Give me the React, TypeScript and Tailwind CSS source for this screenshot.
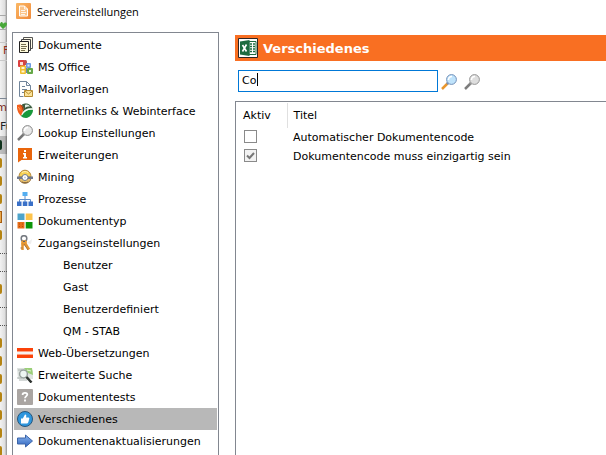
import { useState } from "react";
import type { ReactNode } from "react";

interface NavEntry {
  label: string;
  icon?: ReactNode;
}

interface Setting {
  id: string;
  title: string;
  active: boolean;
}

const svgProps = { width: 16, height: 16, viewBox: "0 0 16 16", "aria-hidden": true };

const AppIcon = () => (
  <svg {...svgProps}>
    <defs>
      <linearGradient id="app" x1="0" y1="0" x2="1" y2="1">
        <stop offset="0" stopColor="#fbb866" />
        <stop offset="1" stopColor="#f08a3a" />
      </linearGradient>
    </defs>
    <rect x="0" y="0" width="15" height="16" rx="1" fill="url(#app)" />
    <path d="M3.500 3h5l3 3v7h-8z" fill="#fbc48a" stroke="#fff" />
    <path d="M8.500 3v3h3M5 7.500h4M5 9.500h5M5 11.500h4" fill="none" stroke="#fff" strokeWidth=".8" />
  </svg>
);

const DocumentsIcon = () => (
  <svg {...svgProps}>
    <path d="M6.500 .5h9v11h-9z" fill="#fffbe8" stroke="#555" />
    <path d="M4.500 2.500h9v11h-9z" fill="#fffbe8" stroke="#444" />
    <path d="M2.500 4.500h9v11h-9z" fill="#fffbdc" stroke="#222" />
    <path d="M4 7.500h5M4 9.500h6M4 11.500h5M4 13.500h4" stroke="#77704c" />
  </svg>
);

const OfficeIcon = () => (
  <svg {...svgProps}>
    <rect x="1" y="1" width="7" height="7" rx="1" fill="#dc4040" />
    <path d="M3 3h3v3H3z" fill="#fbdcd6" />
    <path d="M7 1.500c1-1 3-1 3 1.500v3H8z" fill="#c0504c" />
    <rect x="9" y="4" width="5" height="5" rx="1" fill="#6c9ae0" />
    <path d="M10.500 5.500h2v2h-2z" fill="#e2ecfb" />
    <rect x="3" y="6.500" width="6" height="8.500" rx="1" fill="#efbd2d" />
    <path d="M4.500 8h3v2h-3zM4.500 11.500h3v2h-3z" fill="#fff6d2" />
    <rect x="10" y="9" width="6" height="6" rx="1" fill="#66a848" />
    <path d="M12 11h2v2h-2z" fill="#e2f4d9" />
    <path d="M9 9h1v5H9z" fill="#6b85b8" />
  </svg>
);

const MailTemplateIcon = () => (
  <svg {...svgProps}>
    <path d="M2.500 15.500V.5h7l4 4v5M9.500 .5v4h4M2.500 15.500h4" fill="none" stroke="#71859b" />
    <path d="M5 5.500h3M5 8.500h5M5 11.500h2" stroke="#71859b" />
    <path d="M7.500 9.500h8v6h-8z" fill="#fbe39a" stroke="#b68c32" />
    <path d="m8 10 3.500 3L15 10" fill="none" stroke="#b68c32" />
  </svg>
);

const GlobeIcon = () => (
  <svg {...svgProps}>
    <circle cx="9" cy="7.500" r="7" fill="#bcd3bd" />
    <path d="M5 1.500c4-2.500 9-.5 10.800 4.500C12 4 8 6 6 10z" fill="#3c5a40" />
    <path d="M8 2c2-1 4 0 5 1.500-2 0-4 0-5 1.500z" fill="#e3eee4" />
    <path d="M4 13c2-4 6-7 12-6.500 0 4-3 8-7 8.500-2 0-4-1-5-2z" fill="#18983b" />
    <path d="M4.500 12c2-4 6-6.500 11.500-6" fill="none" stroke="#f5fbf5" strokeWidth="1.500" />
    <path d="M0 2c3-1.500 6 0 6.500 3 .4 3-1.500 4-2.500 8C1 10.500-.5 6 0 2z" fill="#f4601d" />
    <path d="M3.500 2c2 1 2.500 3 2 4.500" fill="none" stroke="#8d3b1b" />
    <path d="M1 4.500c1.500 0 2 1 2 3" fill="none" stroke="#ffa261" />
  </svg>
);

const LensIcon = ({ glass, rim, handle }: { glass: string; rim: string; handle: string }) => (
  <svg {...svgProps}>
    <path d="m1 15 5.500-5.500" stroke={handle} strokeWidth="2.500" />
    <path d="m5.500 8.500 2 2" stroke={rim} strokeWidth="1.500" />
    <circle cx="10.500" cy="5.500" r="4.900" fill={glass} stroke={rim} />
    <path d="M7.500 6c0-2 1.500-3.500 3.500-3.500" fill="none" stroke="#fff" strokeWidth="1.500" />
  </svg>
);

const ExtensionIcon = () => (
  <svg {...svgProps}>
    <path d="M1 1h14v12H4.500L1 15.500z" fill="#e9650c" />
    <path d="M7 3h2v2H7zM6 6h3v4h1v1.500H6V10h1V7.500H6z" fill="#fff" />
  </svg>
);

const MiningIcon = () => (
  <svg {...svgProps}>
    <path d="M2 8c0-9 12-9 12 0z" fill="#f7d154" stroke="#b5883c" />
    <path d="M2 9h12c-.5 7-11.500 7-12 0z" fill="#e9c06a" stroke="#9d7c4c" />
    <path d="M0 7.500h16v2.500H0z" fill="#70798c" />
    <path d="M5 3.500c2-1.200 4-1.200 6 0" fill="none" stroke="#fff3b5" />
    <circle cx="8" cy="8.500" r="3" fill="#fff" stroke="#737b88" />
    <circle cx="8" cy="8.500" r="1" fill="#c5ccd6" />
    <path d="M5 13c2 1 4 1 6 0" fill="none" stroke="#7a5c34" />
  </svg>
);

const ProcessIcon = () => (
  <svg {...svgProps}>
    <path d="M8 5v6M2.500 11V8.500h11V11" fill="none" stroke="#5c8cc8" />
    <path d="M5.500 1h5v4h-5z" fill="#54aef0" />
    <path d="M0 10.500h4.500V15H0zM5.800 10.500h4.500V15H5.800zM11.500 10.500H16V15h-4.500z" fill="#3a70c8" />
  </svg>
);

const DocTypeIcon = () => (
  <svg {...svgProps}>
    <path d="M.5 .5h7v6.500h-7z" fill="#4ea4cb" />
    <path d="M8.700 .5h6.800v6.500H8.700z" fill="#fdc34b" />
    <path d="M.5 9h7v6.500h-7z" fill="#e66d18" />
    <path d="M8.700 9h6.800v6.500H8.700z" fill="#0d9408" />
    <path d="M2 10.500h1v1H2zM5 10.500h1v1H5zM2 13h1v1H2zM5 13h1v1H5z" fill="#b84d0b" />
  </svg>
);

const KeysIcon = () => (
  <svg {...svgProps}>
    <path d="m10 8 5-4-1 5z" fill="#eeeeee" />
    <circle cx="7" cy="3.500" r="2.800" fill="none" stroke="#777b82" strokeWidth="1.500" />
    <path d="M4 6.500c1-1.500 5-2 6 0l-1 3.500-4 1z" fill="#e89a32" />
    <path d="M5.500 8v7M8 8l4 6.500" stroke="#e39431" strokeWidth="2.500" />
    <path d="m7 9 4 6M3.500 13h2" stroke="#a5733a" />
    <path d="M6 6h2v1H6z" fill="#5e6066" />
  </svg>
);

const FlagIcon = () => (
  <svg {...svgProps}>
    <path d="M0 3h16v10H0z" fill="#fb4209" />
    <path d="M0 6.500h16v3H0z" fill="#fff" />
    <path d="M0 8h16" stroke="#eee2de" />
  </svg>
);

const AdvancedSearchIcon = () => (
  <svg {...svgProps}>
    <path d="M0 1h13l3 3v8H1z" fill="#dde2df" />
    <path d="M7 1h8l1 7-5-2z" fill="#9bcf78" />
    <path d="m10 3 4 1" stroke="#e3f4d6" />
    <path d="M1 3h4M0 11h5M2 13h8" stroke="#aab2af" />
    <circle cx="6.500" cy="7" r="3.900" fill="#edf5f2" stroke="#98a19e" strokeWidth="1.500" />
    <path d="m9.500 10 5 5.500" stroke="#2e3330" strokeWidth="2.500" />
  </svg>
);

const TestsIcon = () => (
  <svg {...svgProps}>
    <rect width="16" height="16" rx="1" fill="#aaa5a2" />
    <path d="M5.700 6V5C6 3.300 10.300 3.300 10.300 5.500 10.300 7 8 7.300 8 9.300M8 10.500v2" fill="none" stroke="#fff" strokeWidth="1.800" />
  </svg>
);

const ThumbIcon = () => (
  <svg {...svgProps}>
    <circle cx="8" cy="8" r="7.500" fill="#2f96dd" stroke="#28577c" />
    <path d="M4 7.500h1.800L8 3.500c1.500 0 1.500 1 1 3h2.500c.8 0 1 .8.700 1.500l-1 3.500c-.2.700-.7 1-1.500 1H4z" fill="#fff" />
  </svg>
);

const ArrowIcon = () => (
  <svg {...svgProps}>
    <defs>
      <linearGradient id="arrow" x1="0" y1="0" x2="0" y2="1">
        <stop offset="0" stopColor="#8bb7f0" />
        <stop offset="1" stopColor="#2c62bd" />
      </linearGradient>
    </defs>
    <path d="M.5 5h8V2l7 6-7 6v-3h-8z" fill="url(#arrow)" stroke="#3c65a8" />
  </svg>
);

const ExcelIcon = () => (
  <svg width="20" height="20" viewBox="0 0 20 20" aria-hidden="true">
    <path d="M.5 .5h19v19H.5z" fill="#fff" stroke="#2e2523" />
    <path d="M11 3.500h7v13h-7z" fill="#fff" stroke="#1d6b40" />
    <path d="M12 6h2M15 6h2M12 8.500h2M15 8.500h2M12 11h2M15 11h2M12 13.500h2M15 13.500h2" stroke="#1d6b40" strokeWidth="1.500" />
    <path d="M2 3.500 11.500 2v16L2 16.500z" fill="#1d6b40" />
    <path d="m4.500 7 4 6.500M8.500 6.500l-4 7" stroke="#fff" strokeWidth="1.600" />
  </svg>
);

const navEntries: NavEntry[] = [
  { label: "Dokumente", icon: <DocumentsIcon /> },
  { label: "MS Office", icon: <OfficeIcon /> },
  { label: "Mailvorlagen", icon: <MailTemplateIcon /> },
  { label: "Internetlinks & Webinterface", icon: <GlobeIcon /> },
  { label: "Lookup Einstellungen", icon: <LensIcon glass="#e9e9e9" rim="#888888" handle="#777777" /> },
  { label: "Erweiterungen", icon: <ExtensionIcon /> },
  { label: "Mining", icon: <MiningIcon /> },
  { label: "Prozesse", icon: <ProcessIcon /> },
  { label: "Dokumententyp", icon: <DocTypeIcon /> },
  { label: "Zugangseinstellungen", icon: <KeysIcon /> },
  { label: "Benutzer" },
  { label: "Gast" },
  { label: "Benutzerdefiniert" },
  { label: "QM - STAB" },
  { label: "Web-Übersetzungen", icon: <FlagIcon /> },
  { label: "Erweiterte Suche", icon: <AdvancedSearchIcon /> },
  { label: "Dokumententests", icon: <TestsIcon /> },
  { label: "Verschiedenes", icon: <ThumbIcon /> },
  { label: "Dokumentenaktualisierungen", icon: <ArrowIcon /> },
];

const initialSettings: Setting[] = [
  { id: "auto-code", title: "Automatischer Dokumentencode", active: false },
  { id: "unique-code", title: "Dokumentencode muss einzigartig sein", active: true },
];

// marks in the list of the window behind, one per 18px row
const backgroundRows = [
  "gold", "gold", "gold", "orange", "gold", "dots", "dots", "gold", "dots",
  "dots", "gold", "gold", "gold", "gold", "gold", "gold", "gold",
];

const BackgroundWindow = () => (
  <div className="flex h-full w-[7px] shrink-0 flex-col overflow-hidden bg-linear-to-r from-[#f2f2f2] via-[#dedede] via-70% to-[#8e8e8e] text-[11px]">
    <div className="h-[15px] shrink-0" />
    <div className="flex h-[14px] shrink-0 items-end border-t border-[#a8a8a8]">
      <svg width="7" height="8" viewBox="0 0 7 8" aria-hidden="true">
        <path d="M0 3c1-3 3-2 3 0 1-2 4-2 4 0 0 2-2 3-4 5L0 5z" fill="#48a839" />
      </svg>
    </div>
    <div className="flex h-[13px] shrink-0 border-t border-[#a8a8a8]" />
    <div className="flex h-[18px] shrink-0 items-center border-t border-[#c9c9c9] pl-[3px] text-[#8c2f20]">F</div>
    <div className="h-[38px] shrink-0 border-t border-[#c9c9c9]" />
    <div className="flex h-[20px] shrink-0 items-center justify-end border-t border-[#7d8794] text-[#7a2a1c]">m</div>
    <div className="flex h-[18px] shrink-0 items-center text-[#222]">Fu</div>
    <div className="flex h-[18px] shrink-0 items-center bg-black/20">
      <span className="h-[10px] w-[2px] rounded-r-sm bg-[#10331d]" />
    </div>
    {backgroundRows.map((kind, i) => (
      <div key={i} className="flex h-[18px] shrink-0 items-center">
        {kind === "gold" && <span className="h-[10px] w-[2px] rounded-r-sm bg-[#b58412]" />}
        {kind === "orange" && <span className="h-[12px] w-[2px] border-y border-r border-[#a65d10] bg-[#eba94a]" />}
        {kind === "dots" && <span className="w-full border-t border-dotted border-[#555]" />}
      </div>
    ))}
  </div>
);

const App = () => {
  const [selected, setSelected] = useState("Verschiedenes");
  const [query, setQuery] = useState("Co");
  const [settings, setSettings] = useState(initialSettings);

  const toggle = (id: string) => {
    setSettings((prev) => prev.map((s) => (s.id === id ? { ...s, active: !s.active } : s)));
  };

  return (
    <div className="flex h-screen overflow-hidden bg-white font-['DejaVu_Sans',Verdana,sans-serif] text-[11px] text-black">
      <BackgroundWindow />

      <div className="flex min-w-0 flex-1 flex-col">
        {/* Title bar */}
        <header className="flex h-8 shrink-0 items-start gap-[5px] pt-[3px] pl-[9px]">
          <AppIcon />
          <h1 className="font-['Open_Sans',sans-serif] text-[11px] leading-[18px]">Servereinstellungen</h1>
        </header>

        <div className="flex min-h-0 flex-1 pl-[5px]">
          {/* Navigation */}
          <nav className="w-[207px] shrink-0 overflow-hidden border border-b-0 border-[#828790] p-px">
            {navEntries.map(({ label, icon }) => (
              <button
                key={label}
                type="button"
                onClick={() => setSelected(label)}
                className={`flex h-[22px] w-full items-center gap-[5px] whitespace-nowrap text-left ${
                  icon ? "pl-[3px]" : "pl-[49px]"
                } ${selected === label ? "bg-[#b8b8b8]" : ""}`}
              >
                {icon}
                <span className="pt-[2px]">{label}</span>
              </button>
            ))}
          </nav>

          <main className="ml-4 flex min-w-0 flex-1 flex-col pt-[3px]">
            <div className="flex h-[26px] shrink-0 items-center gap-[5px] bg-[#f96f22] pl-[3px]">
              <ExcelIcon />
              <h2 className="pt-[2px] text-[13px] font-bold text-white">Verschiedenes</h2>
            </div>

            {/* Search */}
            <div className="mt-[9px] flex h-[22px] shrink-0 items-center gap-[3px] pl-[3px]">
              <div className="relative h-full w-[200px]">
                <input
                  type="text"
                  aria-label="Suche"
                  value={query}
                  onChange={(e) => setQuery(e.target.value)}
                  className="h-full w-full border border-[#0078d7] px-[3px] pb-[2px] outline-none"
                />
                {query === "Co" && <span className="absolute top-[3px] left-[19px] h-[13px] w-px bg-black" />}
              </div>
              <button type="button" aria-label="Suchen" className="pt-px">
                <LensIcon glass="#bfe3fb" rim="#7390b8" handle="#e8962e" />
              </button>
              <button type="button" aria-label="Suche löschen" className="ml-1 pt-px">
                <LensIcon glass="#dedede" rim="#969696" handle="#7d7d7d" />
              </button>
            </div>

            {/* Settings list */}
            <div className="mt-[9px] flex-1 overflow-hidden border-t border-l border-[#828790] pt-px">
              <table className="w-full table-fixed border-collapse">
                <thead>
                  <tr className="h-[25px]">
                    <th className="w-[51px] border-r border-[#e0e0e0] pt-[2px] pl-[7px] text-left font-normal">Aktiv</th>
                    <th className="pt-[2px] pl-[6px] text-left font-normal">Titel</th>
                  </tr>
                </thead>
                <tbody>
                  {settings.map((s) => (
                    <tr key={s.id} className="h-[19px]">
                      <td className="p-0 pb-[3px] pl-[8px]">
                        <div className="grid size-[13px] place-items-center">
                          <input
                            id={s.id}
                            type="checkbox"
                            checked={s.active}
                            onChange={() => toggle(s.id)}
                            className="col-start-1 row-start-1 size-[13px] appearance-none border border-[#8a8a8a] bg-white checked:bg-[#f2f2f2]"
                          />
                          {s.active && (
                            <svg
                              width="9"
                              height="9"
                              viewBox="0 0 9 9"
                              aria-hidden="true"
                              className="pointer-events-none col-start-1 row-start-1"
                            >
                              <path d="M1 4.500 3.500 7 8 2" fill="none" stroke="#777" strokeWidth="2" />
                            </svg>
                          )}
                        </div>
                      </td>
                      <td className="p-0 pt-px pl-[6px]">
                        <label htmlFor={s.id}>{s.title}</label>
                      </td>
                    </tr>
                  ))}
                </tbody>
              </table>
            </div>
          </main>
        </div>
      </div>
    </div>
  );
};

export default App;
